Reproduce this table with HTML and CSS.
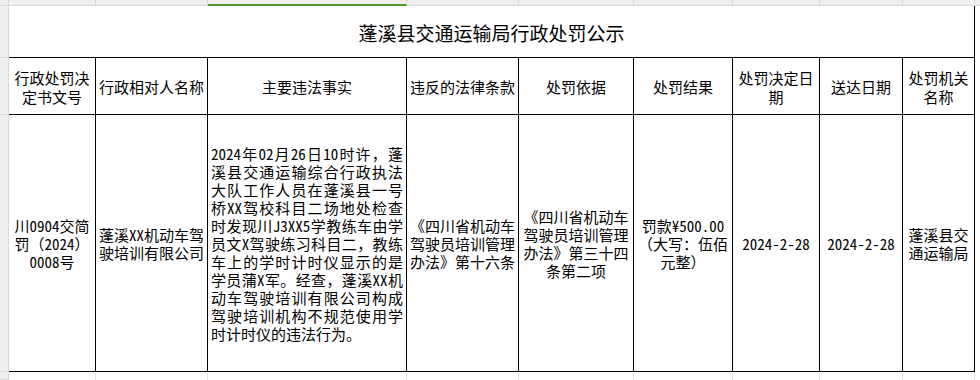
FILE: index.html
```html
<!DOCTYPE html>
<html lang="zh-CN">
<head>
<meta charset="utf-8">
<title>蓬溪县交通运输局行政处罚公示</title>
<link rel="stylesheet" href="styles.css">
</head>
<body>
<div class="sheet">
  <div class="corner"></div>
  <div class="ch"></div>
  <div class="ch"></div>
  <div class="ch ch-active"></div>
  <div class="ch"></div>
  <div class="ch"></div>
  <div class="ch"></div>
  <div class="ch"></div>
  <div class="ch"></div>
  <div class="ch"></div>
  <div class="ch ch-rest"></div>

  <div class="rh"></div>
  <div class="title">蓬溪县交通运输局行政处罚公示</div>
  <div class="rest"></div>

  <div class="rh"></div>
  <div class="cell th">行政处罚决<br>定书文号</div>
  <div class="cell th">行政相对人名称</div>
  <div class="cell th">主要违法事实</div>
  <div class="cell th">违反的法律条款</div>
  <div class="cell th">处罚依据</div>
  <div class="cell th">处罚结果</div>
  <div class="cell th">处罚决定日<br>期</div>
  <div class="cell th">送达日期</div>
  <div class="cell th">处罚机关<br>名称</div>
  <div class="rest"></div>

  <div class="rh"></div>
  <div class="cell td">川0904交简<br>罚（2024）<br>0008号</div>
  <div class="cell td">蓬溪XX机动车驾<br>驶培训有限公司</div>
  <div class="cell td td-facts">
    <span class="jl">2024年02月26日10时许，蓬</span>
    <span class="jl">溪县交通运输综合行政执法</span>
    <span class="jl">大队工作人员在蓬溪县一号</span>
    <span class="jl">桥XX驾校科目二场地处检查</span>
    <span class="jl">时发现川J3XX5学教练车由学</span>
    <span class="jl">员文X驾驶练习科目二，教练</span>
    <span class="jl">车上的学时计时仪显示的是</span>
    <span class="jl">学员蒲X军。经查，蓬溪XX机</span>
    <span class="jl">动车驾驶培训有限公司构成</span>
    <span class="jl">驾驶培训机构不规范使用学</span>
    <span class="jl jl-last">时计时仪的违法行为。</span>
  </div>
  <div class="cell td">《四川省机动车<br>驾驶员培训管理<br>办法》第十六条</div>
  <div class="cell td">《四川省机动车<br>驾驶员培训管理<br>办法》第三十四<br>条第二项</div>
  <div class="cell td">罚款¥500.00<br>（大写：伍佰<br>元整）</div>
  <div class="cell td">2024-2-28</div>
  <div class="cell td">2024-2-28</div>
  <div class="cell td">蓬溪县交<br>通运输局</div>
  <div class="rest"></div>

  <div class="rh"></div>
  <div class="gl"></div>
  <div class="gl"></div>
  <div class="gl"></div>
  <div class="gl"></div>
  <div class="gl"></div>
  <div class="gl"></div>
  <div class="gl"></div>
  <div class="gl"></div>
  <div class="gl"></div>
  <div class="rest"></div>
</div>
</body>
</html>
```

FILE: styles.css
```css
* {
  box-sizing: border-box;
}

html, body {
  margin: 0;
  padding: 0;
  background: #ffffff;
}

body {
  font-family: "Noto Sans CJK SC", sans-serif;
  color: #000000;
  width: 980px;
  height: 380px;
  overflow: hidden;
}

.sheet {
  display: grid;
  grid-template-columns: 9px 87px 112px 199px 112px 115px 99px 87px 83px 72px 1fr;
  grid-template-rows: 6px 52px 57px 257px 1fr;
  height: 380px;
}

.corner {
  background: #ededed;
  border-right: 1px solid #d8d8d8;
  border-bottom: 1px solid #d8d8d8;
}

.ch {
  background: #efefef;
  border-right: 1px solid #d8d8d8;
  border-bottom: 1px solid #d8d8d8;
}

.ch-active {
  border-bottom: 2px solid #4b9a2e;
}

.ch-rest {
  border-right: none;
}

.rh {
  background: #efefef;
  border-right: 1px solid #d8d8d8;
  border-bottom: 1px solid #d8d8d8;
}

.rest {
  background: #ffffff;
}

.title {
  grid-column: 2 / 11;
  border-right: 1px solid #000;
  border-bottom: 1px solid #000;
  display: flex;
  align-items: center;
  justify-content: center;
  font-size: 19px;
  line-height: 24px;
  padding-top: 3px;
}

.cell {
  border-right: 1px solid #000;
  border-bottom: 1px solid #000;
  display: flex;
  flex-direction: column;
  align-items: center;
  justify-content: center;
  text-align: center;
  white-space: nowrap;
  font-size: 15px;
}

.th {
  line-height: 19px;
  padding-top: 1px;
}

.td {
  font-family: "Noto Sans Mono CJK SC", "Noto Sans CJK SC", monospace;
  line-height: 18px;
  padding-top: 1px;
}

.td-facts {
  align-items: stretch;
  padding: 1px 3px 0 3px;
}

.jl {
  display: block;
  text-align: justify;
  text-align-last: justify;
}

.jl-last {
  text-align: left;
  text-align-last: left;
}

.gl {
  border-right: 1px solid #e2e2e2;
}
```
